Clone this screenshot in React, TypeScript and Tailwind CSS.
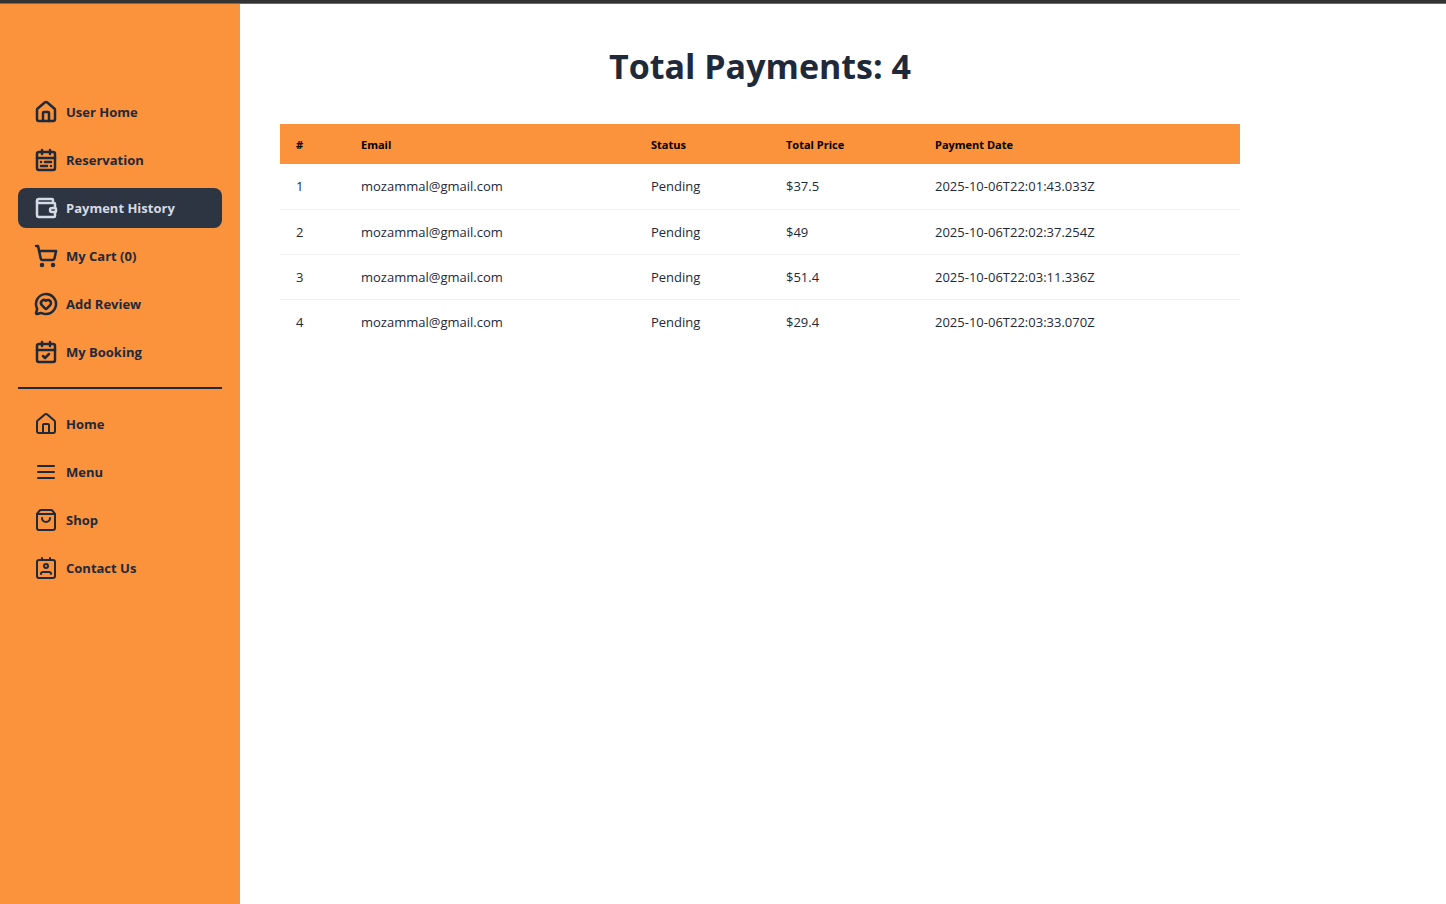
import type { ComponentType, ReactNode } from "react";
import {
  CalendarCheck,
  CalendarRange,
  House,
  MessageCircleHeart,
  ShoppingBag,
  ShoppingCart,
  Wallet,
} from "lucide-react";

type IconProps = { size?: number; strokeWidth?: number };

function StrokeIcon({ size = 24, strokeWidth = 2, children }: IconProps & { children: ReactNode }) {
  return (
    <svg
      width={size}
      height={size}
      viewBox="0 0 24 24"
      fill="none"
      stroke="currentColor"
      strokeWidth={strokeWidth}
      strokeLinecap="round"
      strokeLinejoin="round"
      aria-hidden="true"
    >
      {children}
    </svg>
  );
}

function ContactBadge(props: IconProps) {
  return (
    <StrokeIcon {...props}>
      <path d="M17 18a2 2 0 0 0-2-2H9a2 2 0 0 0-2 2" />
      <rect width="18" height="18" x="3" y="4" rx="2" />
      <circle cx="12" cy="10" r="2" />
      <path d="M8 2v2M16 2v2" />
    </StrokeIcon>
  );
}

function MenuLines(props: IconProps) {
  return (
    <StrokeIcon {...props}>
      <path d="M4 6h16M4 12h16M4 18h16" />
    </StrokeIcon>
  );
}

type Item = { label: string; icon: ComponentType<IconProps>; active?: boolean };

const userLinks: Item[] = [
  { label: "User Home", icon: House },
  { label: "Reservation", icon: CalendarRange },
  { label: "Payment History", icon: Wallet, active: true },
  { label: "My Cart (0)", icon: ShoppingCart },
  { label: "Add Review", icon: MessageCircleHeart },
  { label: "My Booking", icon: CalendarCheck },
];

const siteLinks: Item[] = [
  { label: "Home", icon: House },
  { label: "Menu", icon: MenuLines },
  { label: "Shop", icon: ShoppingBag },
  { label: "Contact Us", icon: ContactBadge },
];

const payments = [
  { email: "mozammal@gmail.com", status: "Pending", price: 37.5, date: "2025-10-06T22:01:43.033Z" },
  { email: "mozammal@gmail.com", status: "Pending", price: 49, date: "2025-10-06T22:02:37.254Z" },
  { email: "mozammal@gmail.com", status: "Pending", price: 51.4, date: "2025-10-06T22:03:11.336Z" },
  { email: "mozammal@gmail.com", status: "Pending", price: 29.4, date: "2025-10-06T22:03:33.070Z" },
];

function NavList({ items, strokeWidth }: { items: Item[]; strokeWidth: number }) {
  return (
    <ul className="flex flex-col gap-2">
      {items.map(({ label, icon: Icon, active }) => (
        <li key={label}>
          <a
            href="#"
            aria-current={active ? "page" : undefined}
            className={
              active
                ? "flex h-10 items-center gap-2 rounded-lg bg-[#2d3442] px-4 text-[#d5dbe5]"
                : "flex h-10 items-center gap-2 px-4 text-gray-800"
            }
          >
            <Icon size={24} strokeWidth={strokeWidth} />
            {label}
          </a>
        </li>
      ))}
    </ul>
  );
}

export default function App() {
  return (
    <div className="flex min-h-screen flex-col bg-white font-['Open_Sans','Noto_Sans',sans-serif] text-gray-800">
      <div className="h-1 border-b border-[#6b6b6b] bg-[#333333]" />
      <div className="flex flex-1">
        <aside className="w-60 shrink-0 bg-[#fb923c] px-[18px] pt-22">
          <nav className="text-[13px] leading-5 font-bold">
            <NavList items={userLinks} strokeWidth={2.5} />
            <hr className="my-[15px] border-t-2 border-gray-800" />
            <NavList items={siteLinks} strokeWidth={2} />
          </nav>
        </aside>
        <main className="min-w-0 flex-1 px-10 pt-10">
          <div className="max-w-[960px]">
            <h1 className="mb-9 text-center text-[34px] leading-11 font-bold">
              Total Payments: {payments.length}
            </h1>
            <table className="w-full table-fixed text-left text-[13px] leading-5">
              <colgroup>
                <col className="w-[65px]" />
                <col className="w-[290px]" />
                <col className="w-[135px]" />
                <col className="w-[149px]" />
                <col />
              </colgroup>
              <thead className="bg-[#fb923c] text-[11px] text-black">
                <tr className="h-10">
                  <th className="px-4 pt-0.5 font-bold">#</th>
                  <th className="px-4 pt-0.5 font-bold">Email</th>
                  <th className="px-4 pt-0.5 font-bold">Status</th>
                  <th className="px-4 pt-0.5 font-bold">Total Price</th>
                  <th className="px-4 pt-0.5 font-bold">Payment Date</th>
                </tr>
              </thead>
              <tbody>
                {payments.map((p, i) => (
                  <tr key={p.date} className="h-[45px] border-b border-[#f2f2f2] last:border-b-0">
                    <td className="px-4">{i + 1}</td>
                    <td className="px-4">{p.email}</td>
                    <td className="px-4">{p.status}</td>
                    <td className="px-4">${p.price}</td>
                    <td className="px-4">{p.date}</td>
                  </tr>
                ))}
              </tbody>
            </table>
          </div>
        </main>
      </div>
    </div>
  );
}
